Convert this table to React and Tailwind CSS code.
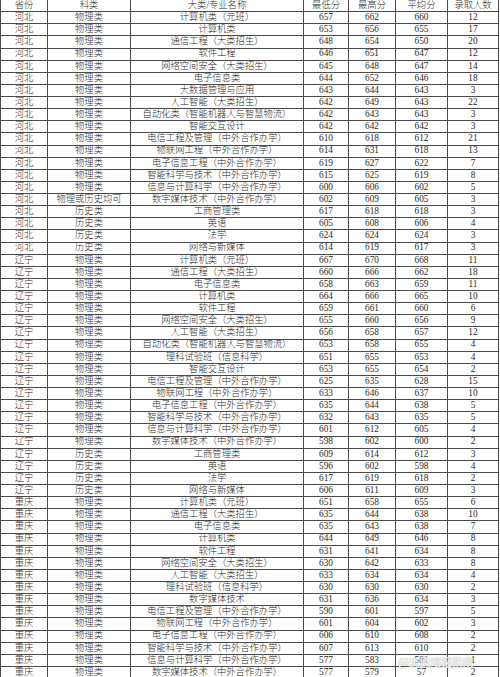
import React from "react";

const rows = [
  ["河北","物理类","计算机类（元班）","657","662","660","12"],
  ["河北","物理类","计算机类","653","656","655","17"],
  ["河北","物理类","通信工程（大类招生）","648","654","650","20"],
  ["河北","物理类","软件工程","646","651","647","12"],
  ["河北","物理类","网络空间安全（大类招生）","645","648","647","14"],
  ["河北","物理类","电子信息类","644","652","646","18"],
  ["河北","物理类","大数据管理与应用","643","644","643","3"],
  ["河北","物理类","人工智能（大类招生）","642","649","643","22"],
  ["河北","物理类","自动化类（智能机器人与智慧物流）","642","643","643","3"],
  ["河北","物理类","智能交互设计","642","642","642","3"],
  ["河北","物理类","电信工程及管理（中外合作办学）","610","618","612","21"],
  ["河北","物理类","物联网工程（中外合作办学）","614","631","618","13"],
  ["河北","物理类","电子信息工程（中外合作办学）","619","627","622","7"],
  ["河北","物理类","智能科学与技术（中外合作办学）","615","625","619","8"],
  ["河北","物理类","信息与计算科学（中外合作办学）","600","606","602","5"],
  ["河北","物理或历史均可","数字媒体技术（中外合作办学）","602","609","605","3"],
  ["河北","历史类","工商管理类","617","618","618","3"],
  ["河北","历史类","英语","605","608","606","4"],
  ["河北","历史类","法学","624","624","624","3"],
  ["河北","历史类","网络与新媒体","614","619","617","3"],
  ["辽宁","物理类","计算机类（元班）","667","670","668","11"],
  ["辽宁","物理类","通信工程（大类招生）","660","666","662","18"],
  ["辽宁","物理类","电子信息类","658","663","659","11"],
  ["辽宁","物理类","计算机类","664","666","665","10"],
  ["辽宁","物理类","软件工程","659","661","660","6"],
  ["辽宁","物理类","网络空间安全（大类招生）","655","660","656","9"],
  ["辽宁","物理类","人工智能（大类招生）","656","658","657","12"],
  ["辽宁","物理类","自动化类（智能机器人与智慧物流）","653","658","655","4"],
  ["辽宁","物理类","理科试验班（信息科学）","651","655","653","4"],
  ["辽宁","物理类","智能交互设计","653","655","654","2"],
  ["辽宁","物理类","电信工程及管理（中外合作办学）","625","635","628","15"],
  ["辽宁","物理类","物联网工程（中外合作办学）","633","646","637","10"],
  ["辽宁","物理类","电子信息工程（中外合作办学）","635","644","638","5"],
  ["辽宁","物理类","智能科学与技术（中外合作办学）","632","643","635","5"],
  ["辽宁","物理类","信息与计算科学（中外合作办学）","601","612","605","4"],
  ["辽宁","物理类","数字媒体技术（中外合作办学）","598","602","600","2"],
  ["辽宁","历史类","工商管理类","609","614","612","3"],
  ["辽宁","历史类","英语","596","602","598","4"],
  ["辽宁","历史类","法学","617","619","618","2"],
  ["辽宁","历史类","网络与新媒体","606","611","609","3"],
  ["重庆","物理类","计算机类（元班）","651","658","655","6"],
  ["重庆","物理类","通信工程（大类招生）","635","644","638","10"],
  ["重庆","物理类","电子信息类","635","643","638","7"],
  ["重庆","物理类","计算机类","644","649","646","8"],
  ["重庆","物理类","软件工程","631","641","634","8"],
  ["重庆","物理类","网络空间安全（大类招生）","630","642","633","8"],
  ["重庆","物理类","人工智能（大类招生）","633","634","634","4"],
  ["重庆","物理类","理科试验班（信息科学）","630","630","630","2"],
  ["重庆","物理类","数字媒体技术","631","636","634","3"],
  ["重庆","物理类","电信工程及管理（中外合作办学）","590","601","597","5"],
  ["重庆","物理类","物联网工程（中外合作办学）","601","604","602","3"],
  ["重庆","物理类","电子信息工程（中外合作办学）","606","610","608","2"],
  ["重庆","物理类","智能科学与技术（中外合作办学）","607","613","610","2"],
  ["重庆","物理类","信息与计算科学（中外合作办学）","577","583","581","1"],
  ["重庆","物理类","数字媒体技术（中外合作办学）","577","579","57","2"],
];

const header = ["省份","科类","大类/专业名称","最低分","最高分","平均分","录取人数"];

function Cell({ children }) {
  return (
    <div className="flex items-center justify-center border-r border-b border-[#4a4a4a] leading-none whitespace-nowrap overflow-hidden">
      {children}
    </div>
  );
}

export default function App() {
  return (
    <div
      className="relative w-[500px] h-[677px] overflow-hidden bg-white text-[#2a2a2a] text-[9.3px] font-light"
      style={{ fontFamily: "'Liberation Serif', 'Noto Sans CJK SC', serif" }}
    >
      <div className="grid grid-cols-[47px_83px_173px_45px_47px_52px_51px] auto-rows-[12.13px] border-l border-[#4a4a4a] w-[499px]">
        {header.map((h, i) => (
          <Cell key={"h" + i}>{h}</Cell>
        ))}
        {rows.map((r, ri) =>
          r.map((c, ci) => <Cell key={ri + "-" + ci}>{c}</Cell>)
        )}
      </div>
      <div className="absolute left-[398px] top-[654px] text-[11px] font-bold text-white/80 tracking-tight [text-shadow:0_0_1px_#9a9a9a]" style={{ fontFamily: "'Noto Sans CJK SC', sans-serif" }}>
        @志愿填报指南
      </div>
    </div>
  );
}
